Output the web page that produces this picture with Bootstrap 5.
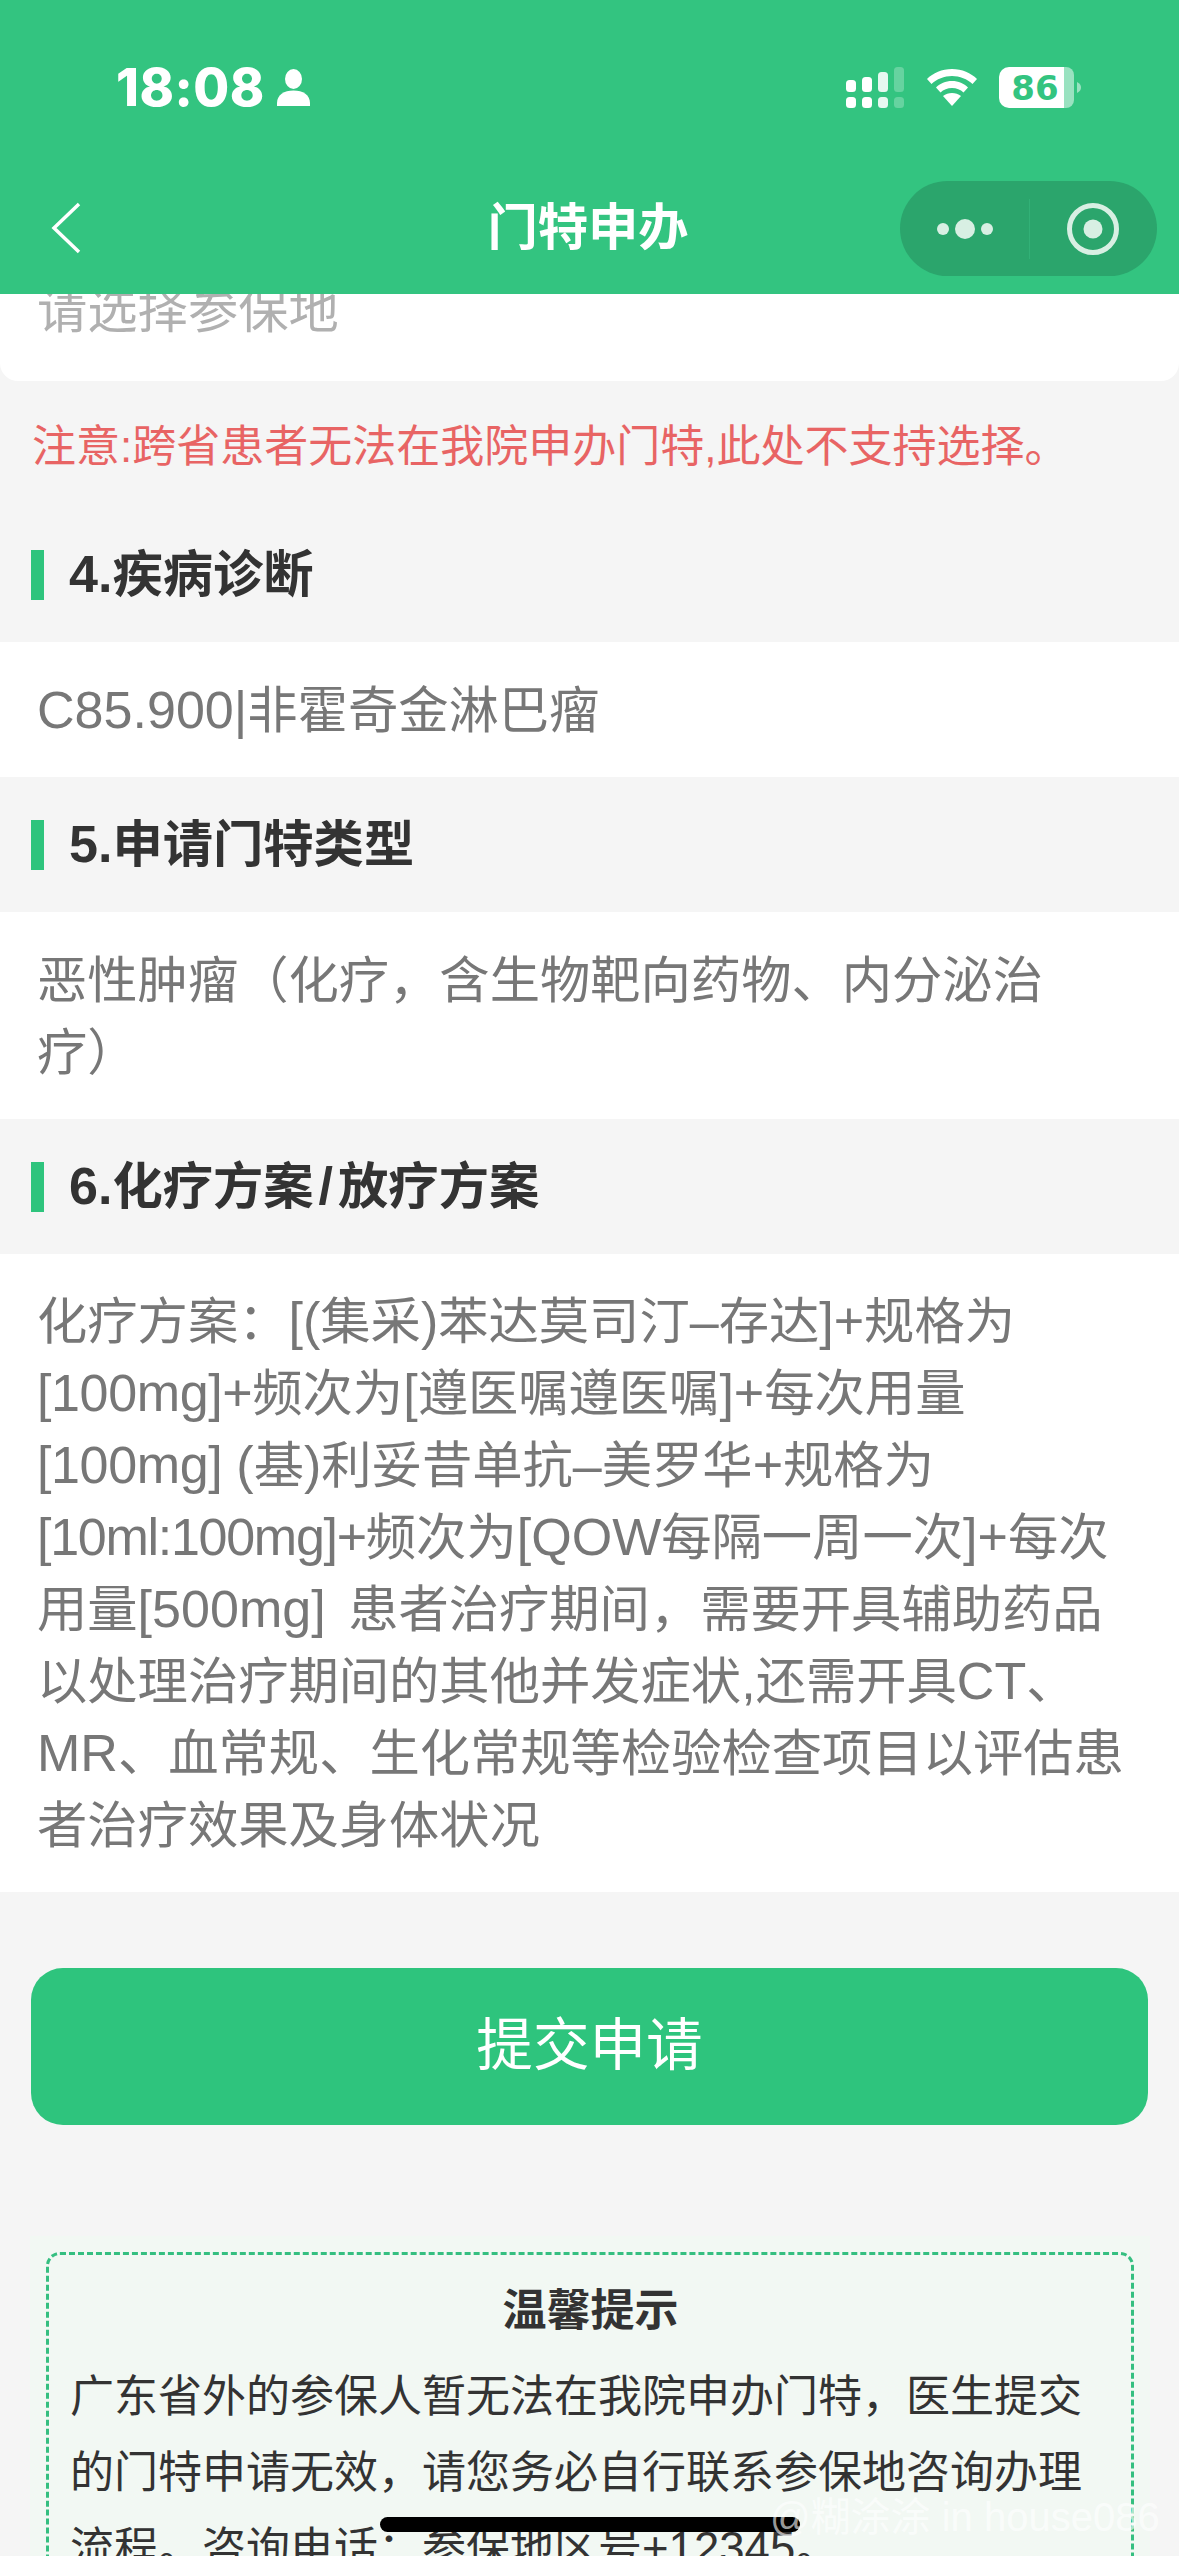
<!DOCTYPE html>
<html lang="zh">
<head>
<meta charset="utf-8">
<title>门特申办</title>
<link href="https://cdn.jsdelivr.net/npm/bootstrap@5.3.0/dist/css/bootstrap.min.css" rel="stylesheet">
<style>
html,body{margin:0;height:2556px;overflow:hidden;background:#f5f5f5;font-family:"Liberation Sans","Noto Sans CJK SC",sans-serif;}
.app-screen{position:relative;width:1179px;height:2556px;overflow:hidden;}
.app-head{height:294px;background:#33c480;color:#fff;}
.status-row{height:180px;padding:0 0 0 116px;}
.status-time{font-family:Inter,"Liberation Sans",sans-serif;font-weight:800;font-size:52px;letter-spacing:.5px;line-height:1;margin-top:62px;width:146px;white-space:nowrap;}
.status-user{margin:69px 0 0 15px;}
.status-icons{margin:0 0 0 auto;width:333px;height:180px;}
.nav-line{display:grid;grid-template-columns:1fr auto 1fr;align-items:center;height:95px;}
.nav-back{margin-left:51px;}
.nav-title{font-size:50.3px;font-weight:700;line-height:1;margin-right:3px;}
.capsule-box{justify-self:end;margin-right:22px;margin-top:1px;}
.clip-card{height:87px;background:#fff;border-radius:0 0 18px 18px;overflow:hidden;padding-left:37px;}
.clip-text{font-size:50.3px;line-height:72px;color:#b0b0b0;margin-top:-19px;}
.warn-line{color:#e86464;font-size:44px;line-height:72px;padding:30px 0 0 32px;white-space:nowrap;height:102px;}
.latin-run,.latin-snug,.latin-tight{font-size:1.035em;line-height:0;}
.latin-snug{letter-spacing:-.4px;}
.latin-tight{letter-spacing:-1.3px;}
.wide-gap{margin-right:8px;}
.slash-run{font-size:1.035em;line-height:0;margin:0 5px;}
.sect-head{height:135px;color:#333;font-size:50.3px;font-weight:700;}
.warn-line + .sect-head{height:159px;padding-top:25px;}
.sect-mark{width:13px;height:50px;background:#2ec47d;margin:0 25px 0 31px;}
.warn-line + .sect-head .sect-mark{margin-top:-1px;}
.sect-body{background:#fff;color:#777;font-size:50.3px;line-height:72px;padding:33px 37px 30px 37px;white-space:nowrap;}
.sect-body.is-long{padding:32px 37px 30px 37px;}
.submit-wrap{padding:76px 31px 0 31px;}
.submit-btn{height:157px;border-radius:32px;background:#2ec47d;border:0;color:#fff;font-size:56.6px;line-height:1;}
.tip-panel{margin:111px 29px 0 30px;background:#f2f8f3;padding:16px 16px 0 16px;height:400px;}
.tip-frame{border:3px dashed #35bf80;border-radius:14px;padding:24px 20px 0 21px;color:#333;height:600px;}
.tip-title{font-size:44px;font-weight:700;line-height:64px;text-align:center;margin-bottom:16px;}
.tip-text{font-size:44px;line-height:76px;white-space:nowrap;}
.home-bar{position:absolute;left:380px;top:2517px;width:420px;height:15px;background:#000;border-radius:8px;}
.mark-text{position:absolute;left:770px;top:2494px;font-size:40px;line-height:46px;color:rgba(255,255,255,.62);white-space:nowrap;}
</style>
</head>
<body>
<div class="app-screen">
  <header class="app-head">
    <div class="status-row d-flex align-items-start">
      <div class="status-time">18:08</div>
      <svg class="status-user" width="33" height="37" viewBox="0 0 33 37" aria-hidden="true"><ellipse cx="16.500" cy="10" rx="8.500" ry="10" fill="#fff"/><path d="M0 37v-3C0 26 7 21.500 16.500 21.500S33 26 33 34v3z" fill="#fff"/></svg>
      <svg class="status-icons" viewBox="846 0 333 180" aria-hidden="true">
        <g fill="#fff">
          <rect x="846" y="80" width="10" height="12" rx="3.500"/><rect x="862" y="77" width="10" height="15" rx="3.500"/><rect x="878" y="72" width="10" height="20" rx="3.500" opacity=".88"/><rect x="894" y="67" width="10" height="25" rx="3.500" opacity=".25"/>
          <rect x="846" y="97" width="10" height="11" rx="3.500"/><rect x="862" y="97" width="10" height="11" rx="3.500"/><rect x="878" y="97" width="10" height="11" rx="3.500" opacity=".88"/><rect x="894" y="97" width="10" height="11" rx="3.500" opacity=".25"/>
          <path d="M952 106l-9-10c5-4 13-4 18 0z"/>
          <path d="M952 69c10 0 19 4 25 10l-4.500 5c-5-5-13-8-20.500-8s-15.500 3-20.500 8L927 79c6-6 15-10 25-10z"/>
          <path d="M952 81c6.500 0 12 2.500 16 6.500l-4.500 5c-3-3-7-4.500-11.500-4.500s-8.500 1.500-11.500 4.500l-4.500-5c4-4 9.500-6.500 16-6.500z"/>
          <path d="M1009 67h55v41h-55a10 10 0 0 1-10-10V77a10 10 0 0 1 10-10z"/>
          <path d="M1064 67h2a8 8 0 0 1 8 8v25a8 8 0 0 1-8 8h-2z" opacity=".5"/>
          <path d="M1077 82c3 1.500 4 3.500 4 5.500s-1 4-4 5.500z" opacity=".5"/>
        </g>
        <text x="1035" y="100" text-anchor="middle" font-family="DejaVu Sans" font-weight="700" font-size="34" fill="#33c480">86</text>
      </svg>
    </div>
    <div class="nav-line">
      <svg class="nav-back" width="30" height="52" viewBox="0 0 30 52" aria-hidden="true"><path d="M28 2L3 26l25 24" fill="none" stroke="#fff" stroke-width="3.500"/></svg>
      <div class="nav-title">门特申办</div>
      <svg class="capsule-box" width="257" height="95" viewBox="0 0 257 95" aria-hidden="true">
        <rect width="257" height="95" rx="47.500" fill="#2ba56c"/>
        <rect x="129" y="18" width="1" height="60" fill="#32b177"/>
        <g fill="#d8efe3"><circle cx="43" cy="48" r="6"/><circle cx="65" cy="48" r="10"/><circle cx="87" cy="48" r="6"/><circle cx="193" cy="48" r="9.500"/></g>
        <circle cx="193" cy="48" r="23.500" fill="none" stroke="#d8efe3" stroke-width="5"/>
      </svg>
    </div>
  </header>

  <main>
    <div class="clip-card"><div class="clip-text">请选择参保地</div></div>
    <div class="warn-line">注意:跨省患者无法在我院申办门特,此处不支持选择。</div>

    <div class="sect-head d-flex align-items-center"><span class="sect-mark"></span><span><span class="latin-run">4.</span>疾病诊断</span></div>
    <div class="sect-body"><span class="latin-run">C85.900|</span>非霍奇金淋巴瘤</div>

    <div class="sect-head d-flex align-items-center"><span class="sect-mark"></span><span><span class="latin-run">5.</span>申请门特类型</span></div>
    <div class="sect-body">恶性肿瘤（化疗，含生物靶向药物、内分泌治<br>疗）</div>

    <div class="sect-head d-flex align-items-center"><span class="sect-mark"></span><span><span class="latin-run">6.</span>化疗方案<span class="slash-run">/</span>放疗方案</span></div>
    <div class="sect-body is-long">化疗方案：<span class="latin-run">[(</span>集采<span class="latin-run">)</span>苯达莫司汀<span class="latin-run">–</span>存达<span class="latin-run">]+</span>规格为<br><span class="latin-snug">[100mg]+</span>频次为<span class="latin-run">[</span>遵医嘱遵医嘱<span class="latin-run">]+</span>每次用量<br><span class="latin-snug">[100mg] </span><span class="latin-run">(</span>基<span class="latin-run">)</span>利妥昔单抗<span class="latin-run">–</span>美罗华<span class="latin-run">+</span>规格为<br><span class="latin-tight">[10ml:100mg]+</span>频次为<span class="latin-run">[QOW</span>每隔一周一次<span class="latin-run">]+</span>每次<br>用量<span class="latin-run wide-gap">[500mg] </span>患者治疗期间，需要开具辅助药品<br>以处理治疗期间的其他并发症状<span class="latin-run">,</span>还需开具<span class="latin-run">CT</span>、<br><span class="latin-run">MR</span>、血常规、生化常规等检验检查项目以评估患<br>者治疗效果及身体状况</div>

    <div class="submit-wrap"><button type="button" class="btn submit-btn w-100">提交申请</button></div>

    <section class="tip-panel">
      <div class="tip-frame">
        <div class="tip-title">温馨提示</div>
        <div class="tip-text">广东省外的参保人暂无法在我院申办门特，医生提交<br>的门特申请无效，请您务必自行联系参保地咨询办理<br>流程。咨询电话：参保地区号<span class="latin-run">+12345</span>。</div>
      </div>
    </section>
  </main>

  <div class="home-bar"></div>
  <div class="mark-text">@糊涂涂 in house086</div>
</div>
<script src="https://cdn.jsdelivr.net/npm/bootstrap@5.3.0/dist/js/bootstrap.bundle.min.js"></script>
</body>
</html>
